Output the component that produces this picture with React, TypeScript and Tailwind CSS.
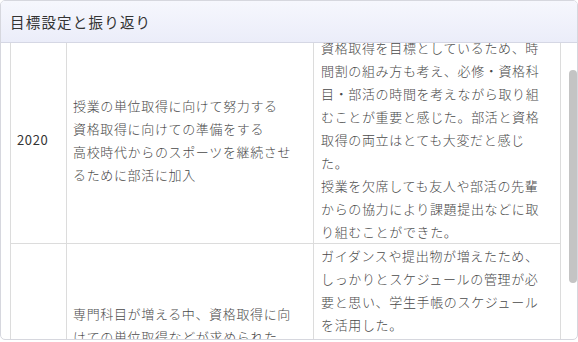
import React, { useEffect, useRef } from "react";

const rows = [
  {
    year: "2020",
    goals: [
      "授業の単位取得に向けて努力する",
      "資格取得に向けての準備をする",
      "高校時代からのスポーツを継続させるために部活に加入",
    ],
    review: [
      "資格取得を目標としているため、時間割の組み方も考え、必修・資格科目・部活の時間を考えながら取り組むことが重要と感じた。部活と資格取得の両立はとても大変だと感じた。",
      "授業を欠席しても友人や部活の先輩からの協力により課題提出などに取り組むことができた。",
    ],
  },
  {
    year: "",
    goals: ["専門科目が増える中、資格取得に向けての単位取得などが求められた"],
    review: [
      "ガイダンスや提出物が増えたため、しっかりとスケジュールの管理が必要と思い、学生手帳のスケジュールを活用した。",
      "授業と専門科目が増えたが、一方で部活の時間も確保できるよう工夫した。",
    ],
  },
];

export default function App() {
  const bodyRef = useRef<HTMLDivElement>(null);

  useEffect(() => {
    if (bodyRef.current) bodyRef.current.scrollTop = 8;
  }, []);

  return (
    <div
      className="w-[578px] h-[342px] bg-white overflow-hidden"
      style={{ fontFamily: '"Noto Sans CJK JP", "Noto Sans", sans-serif' }}
    >
      <div className="h-[340px] flex flex-col rounded-[5px] border border-[#d6d7de] overflow-hidden bg-white">
        {/* Header */}
        <div className="h-[42px] shrink-0 flex items-center px-[9px] bg-gradient-to-b from-[#f6f7fd] to-[#ebedf9] border-b border-[#d5d7e4]">
          <h2 className="text-[14.5px] tracking-[1.2px] text-[#333]">目標設定と振り返り</h2>
        </div>

        {/* Body */}
        <div className="relative flex-1 min-h-0">
          <div
            ref={bodyRef}
            className="h-full overflow-y-auto pl-[9px] pr-[9px] pb-10 [scrollbar-width:none]"
          >
            <table className="w-[550px] border-collapse table-fixed text-[13px] leading-[23px] tracking-[0.65px] text-[#4a4a4a] font-light">
              <colgroup>
                <col className="w-[56px]" />
                <col className="w-[247px]" />
                <col className="w-[247px]" />
              </colgroup>
              <tbody>
                {rows.map((row, i) => (
                  <tr key={i}>
                    <td className="border border-[#dcdcdc] px-[6px] align-middle text-[#333] font-normal">
                      {row.year}
                    </td>
                    <td className="border border-[#dcdcdc] pl-[6px] pr-[12px] align-middle">
                      {row.goals.map((g, j) => (
                        <p key={j}>{g}</p>
                      ))}
                    </td>
                    <td className="border border-[#dcdcdc] pl-[7px] pr-[12px] py-0 align-middle">
                      {row.review.map((r, j) => (
                        <p key={j}>{r}</p>
                      ))}
                    </td>
                  </tr>
                ))}
              </tbody>
            </table>
          </div>

          {/* Scrollbar thumb */}
          <div className="absolute right-0 top-[27px] w-[8px] h-[213px] rounded-full bg-[#c4c4c4]" />
        </div>
      </div>
    </div>
  );
}
